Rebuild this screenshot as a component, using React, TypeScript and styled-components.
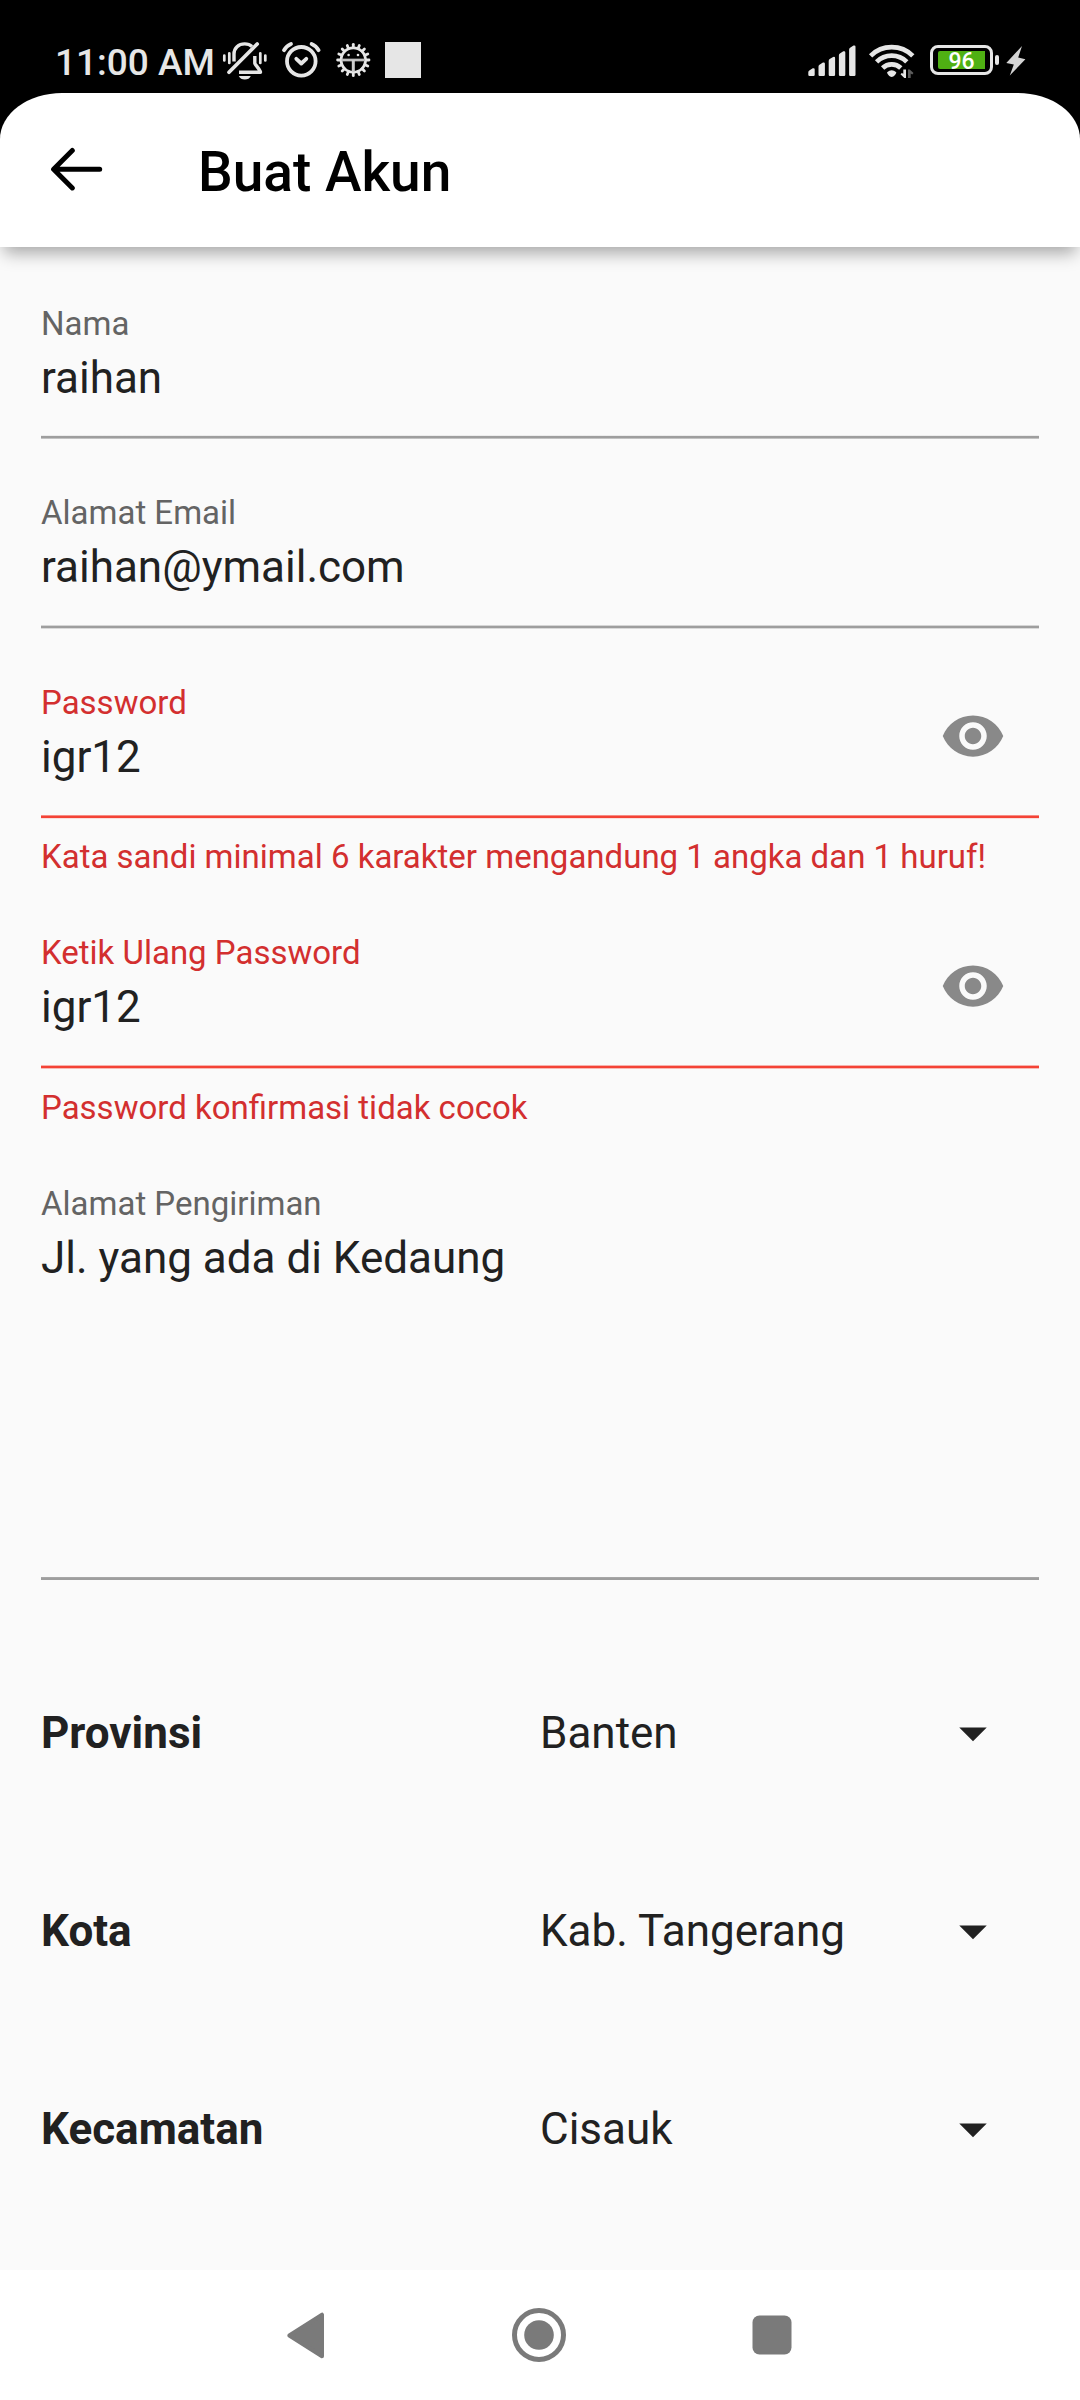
import React from 'react';
import styled, { createGlobalStyle } from 'styled-components';

const GlobalStyle = createGlobalStyle`
  * { box-sizing: border-box; }
  body { margin: 0; background: #fafafa; font-family: Roboto, "Liberation Sans", sans-serif; }
`;

const Screen = styled.div`
  display: flex;
  flex-direction: column;
  width: 1080px;
  height: 2400px;
  overflow: hidden;
  background: #fafafa;
  color: #212121;
`;

const TopArea = styled.div`
  flex: none;
  background: #000;
  box-shadow: 0 10px 16px -4px rgba(0, 0, 0, 0.34);
`;

const StatusBar = styled.div`
  display: flex;
  align-items: flex-start;
  height: 93px;
  padding: 40px 54px 0 55px;
  color: #e6e6e6;
`;

const Clock = styled.span`
  width: 167px;
  font-size: 37px;
  font-weight: 500;
  line-height: 45px;
  white-space: nowrap;
`;

const Glyph = styled.svg<{ $gap?: number }>`
  display: block;
  flex: none;
  margin-left: ${(p) => p.$gap ?? 0}px;
`;

const NoticeSquare = styled.span`
  width: 36px;
  height: 36px;
  margin: 2px auto 0 13px;
  background: #e6e6e6;
`;

const Battery = styled.div`
  display: flex;
  align-items: center;
  gap: 2px;
  height: 30px;
  margin: 5px 0 0 14px;
`;

const BatteryShell = styled.div`
  display: flex;
  align-items: center;
  justify-content: center;
  width: 63px;
  height: 30px;
  border: 3px solid #e6e6e6;
  border-radius: 8px;
`;

const BatteryCharge = styled.span`
  width: 47px;
  height: 18px;
  border-radius: 2px 0 0 2px;
  background: #4fb013;
  color: #fff;
  font-size: 23px;
  font-weight: 500;
  line-height: 22px;
  text-align: center;
`;

const BatteryTip = styled.span`
  width: 4px;
  height: 10px;
  border-radius: 2px;
  background: #e6e6e6;
`;

const AppBar = styled.header`
  display: flex;
  height: 154px;
  padding-left: 50px;
  background: #fff;
  border-radius: 62px 62px 0 0 / 46px 46px 0 0;
`;

const BackButton = styled.button`
  display: flex;
  align-items: flex-start;
  width: 148px;
  padding: 54px 0 0;
  border: 0;
  background: none;
`;

const Title = styled.h1`
  margin: 47px 0 0;
  color: #000;
  font-size: 55px;
  font-weight: 500;
  line-height: 64px;
`;

const Form = styled.main`
  display: flex;
  flex: 1;
  flex-direction: column;
  padding: 57px 41px 0;
`;

const FieldGroup = styled.div<{ $after: number }>`
  display: flex;
  flex-direction: column;
  margin-bottom: ${(p) => p.$after}px;
`;

const FieldBox = styled.div<{ $height: number }>`
  display: flex;
  align-items: flex-start;
  justify-content: space-between;
  height: ${(p) => p.$height}px;
  padding-right: 33.5px;
`;

const FieldText = styled.div`
  display: flex;
  flex-direction: column;
  gap: 9px;
`;

const Label = styled.span<{ $error?: boolean }>`
  color: ${(p) => (p.$error ? '#d32f2f' : '#646464')};
  font-size: 33px;
  line-height: 39px;
`;

const Value = styled.span`
  font-size: 44px;
  line-height: 52px;
`;

const EyeButton = styled.button`
  width: 66px;
  height: 66px;
  margin-top: 20px;
  padding: 0;
  border: 0;
  background: none;
`;

/* A 2.75px rule: two solid rows with a softer row above and below. */
const Underline = styled.div<{ $rgb: string; $lead: number; $trail: number }>`
  height: 4px;
  background: linear-gradient(
    rgba(${(p) => p.$rgb}, ${(p) => p.$lead}) 0 1px,
    rgb(${(p) => p.$rgb}) 1px 2px,
    rgb(${(p) => p.$rgb}) 2px 3px,
    rgba(${(p) => p.$rgb}, ${(p) => p.$trail}) 3px 4px
  );
`;

const ErrorText = styled.span<{ $gap: number }>`
  margin-top: ${(p) => p.$gap}px;
  color: #d32f2f;
  font-size: 33px;
  line-height: 39px;
  white-space: nowrap;
`;

const Regions = styled.section`
  display: grid;
  grid-auto-rows: 198px;
`;

const RegionRow = styled.div`
  display: grid;
  grid-template-columns: 1fr 1fr;
  align-items: center;
`;

const RegionName = styled.span`
  font-size: 44px;
  font-weight: 700;
  line-height: 52px;
`;

const RegionSelect = styled.div`
  display: flex;
  align-items: center;
  justify-content: space-between;
  padding-right: 33.5px;
`;

const NavBar = styled.nav`
  display: flex;
  flex: none;
  align-items: center;
  justify-content: center;
  gap: 178px;
  height: 130px;
  padding-right: 1px;
  background: #fff;
`;

const NavButton = styled.button`
  width: 55px;
  height: 55px;
  padding: 0;
  border: 0;
  background: none;
`;

const GRAY = '158, 158, 158';
const RED = '244, 67, 54';

const fields = [
  { label: 'Nama', value: 'raihan', height: 131, lead: 0.15, trail: 0.6, after: 54 },
  { label: 'Alamat Email', value: 'raihan@ymail.com', height: 132, lead: 0.4, trail: 0.35, after: 54 },
  {
    label: 'Password', value: 'igr12', height: 132, lead: 0.6, trail: 0.15, after: 57,
    error: 'Kata sandi minimal 6 karakter mengandung 1 angka dan 1 huruf!', errorGap: 18,
  },
  {
    label: 'Ketik Ulang Password', value: 'igr12', height: 132, lead: 0.4, trail: 0.35, after: 57,
    error: 'Password konfirmasi tidak cocok', errorGap: 19,
  },
  { label: 'Alamat Pengiriman', value: 'Jl. yang ada di Kedaung', height: 393, lead: 0.9, trail: 0, after: 53 },
];

const regions = [
  ['Provinsi', 'Banten'],
  ['Kota', 'Kab. Tangerang'],
  ['Kecamatan', 'Cisauk'],
];

const MutedBell = () => (
  <Glyph width="46" height="40" fill="none" stroke="#e6e6e6" strokeWidth="3.4" strokeLinecap="round" strokeLinejoin="round">
    <path d="M2.3 15.5v5M7.3 13.3v9.6M38.3 13.3v9.6M43.3 15.5v5" strokeWidth="2.7" />
    <path d="M12 21.5V14C12 8 16.5 3.9 22.7 3.9c3 0 5.600 1 7.300 2.600" strokeLinecap="butt" />
    <path d="M7 32.300 35.200 4" strokeWidth="3.700" />
    <path d="M32.800 16v7.200c0 1.200 5.700 7 5.700 9.100H17" strokeLinecap="butt" />
    <path d="M16.800 36h12c-1 2.300-3.200 3.600-6 3.600s-5-1.300-6-3.600z" fill="#e6e6e6" stroke="none" />
  </Glyph>
);

const AlarmClock = () => (
  <Glyph $gap={12} width="43" height="40" fill="none" stroke="#e6e6e6" strokeWidth="3.8" strokeLinecap="round" strokeLinejoin="round">
    <circle cx="21.3" cy="21.3" r="14.3" />
    <path d="m16.300 18.800 5 4.700 5-4.700" />
    <path d="M4 10.200c1.700-3 4-5.100 7-6.300M38.600 10.200c-1.700-3-4-5.100-7-6.300" />
  </Glyph>
);

const BugGear = () => (
  <Glyph $gap={12} width="37" height="40" fill="none" stroke="#e6e6e6">
    <circle cx="18.3" cy="20" r="12.2" strokeWidth="2.800" />
    {Array.from({ length: 16 }, (_, i) => (
      <path key={i} d="M18.300 7.500V4.300" strokeWidth="2.800" strokeLinecap="round" transform={`rotate(${i * 22.5} 18.3 20)`} />
    ))}
    <path d="M6.500 20h23.600" strokeWidth="2.700" stroke="#bdbdbd" />
    <path d="M18.300 20v12" strokeWidth="3" stroke="#cfcfcf" />
    <circle cx="13.6" cy="15" r="1.3" fill="#e6e6e6" stroke="none" />
    <circle cx="23" cy="15" r="1.3" fill="#e6e6e6" stroke="none" />
  </Glyph>
);

const Signal = () => (
  <Glyph width="48" height="40" fill="#e6e6e6">
    {[28, 22.3, 16.7, 11, 5.3].map((top, i) => {
      const x = 0.3 + i * 10.2;
      return (
        <path key={top} d={`M${x} ${top + 4.2}q0-1.200 1-1.800l3.400-2.100q2-.6 2 1.200V34.800q0 1.200-1.200 1.200H${x + 1.2}q-1.200 0-1.200-1.200z`} />
      );
    })}
  </Glyph>
);

const Wifi = () => (
  <Glyph $gap={12} width="48" height="40" fill="none" stroke="#e6e6e6" strokeWidth="4.700">
    <path d="M2.600 15.800A30 30 0 0 1 44.800 15.800" />
    <path d="M8.600 21.800A21.500 21.500 0 0 1 38.800 21.800" />
    <path d="M14.600 28A13 13 0 0 1 32.800 28" />
    <path d="M19.100 32.300q4.600-4.200 9.200 0c0 2-2.600 4.700-4.600 4.700s-4.600-2.700-4.600-4.700z" fill="#e6e6e6" stroke="none" />
    <path d="M34.800 29.500h2.700V38h-1.700L32 34.300l1.300-1.300 1.500.800z" fill="#e6e6e6" stroke="none" transform="translate(.5 0)" />
    <path d="M40 38v-8.500h1.700l3.800 3.600-1.300 1.300-1.500-.8V38z" fill="#5c5c5c" stroke="none" />
  </Glyph>
);

const Bolt = () => (
  <Glyph $gap={7} width="20" height="40" fill="#d4d4d4">
    <path d="M16 6 .300 23l7.500 1.400L3.800 35.500 19.400 19.300l-7.200-1.700z" />
  </Glyph>
);

const Eye = () => (
  <Glyph width="66" height="66" viewBox="0 0 24 24" fill="#898989">
    <path d="M12 4.500C7 4.500 2.730 7.610 1 12c1.730 4.390 6 7.500 11 7.500s9.270-3.110 11-7.500c-1.730-4.390-6-7.500-11-7.500zM12 17c-2.760 0-5-2.240-5-5s2.240-5 5-5 5 2.240 5 5-2.240 5-5 5zm0-8c-1.660 0-3 1.340-3 3s1.340 3 3 3 3-1.340 3-3-1.340-3-3-3z" />
  </Glyph>
);

const DropArrow = () => (
  <Glyph width="66" height="66" viewBox="0 0 24 24" fill="#212121">
    <path d="m7 10 5 5 5-5z" />
  </Glyph>
);

export default function App() {
  return (
    <>
      <GlobalStyle />
      <Screen>
        <TopArea>
          <StatusBar>
            <Clock>11:00 AM</Clock>
            <MutedBell />
            <AlarmClock />
            <BugGear />
            <NoticeSquare />
            <Signal />
            <Wifi />
            <Battery>
              <BatteryShell>
                <BatteryCharge>96</BatteryCharge>
              </BatteryShell>
              <BatteryTip />
            </Battery>
            <Bolt />
          </StatusBar>
          <AppBar>
            <BackButton aria-label="Kembali">
              <Glyph width="54" height="45" fill="none" stroke="#000" strokeWidth="5" strokeLinecap="round" strokeLinejoin="round">
                <path d="M22.300 3.500 3.600 22.200l18.700 18.700M4.500 22.200h45.200" />
              </Glyph>
            </BackButton>
            <Title>Buat Akun</Title>
          </AppBar>
        </TopArea>
        <Form>
          {fields.map((f) => (
            <FieldGroup key={f.label} $after={f.after}>
              <FieldBox $height={f.height}>
                <FieldText>
                  <Label $error={!!f.error}>{f.label}</Label>
                  <Value>{f.value}</Value>
                </FieldText>
                {f.error && (
                  <EyeButton aria-label={f.label}>
                    <Eye />
                  </EyeButton>
                )}
              </FieldBox>
              <Underline $rgb={f.error ? RED : GRAY} $lead={f.lead} $trail={f.trail} />
              {f.error && <ErrorText $gap={f.errorGap ?? 18}>{f.error}</ErrorText>}
            </FieldGroup>
          ))}
          <Regions>
            {regions.map(([name, value]) => (
              <RegionRow key={name}>
                <RegionName>{name}</RegionName>
                <RegionSelect>
                  <Value>{value}</Value>
                  <DropArrow />
                </RegionSelect>
              </RegionRow>
            ))}
          </Regions>
        </Form>
        <NavBar>
          <NavButton aria-label="Back">
            <Glyph width="55" height="55" fill="#7a7a7a" stroke="#7a7a7a" strokeWidth="4" strokeLinejoin="round">
              <path d="M43 6.700v41.600L10.300 27.500z" />
            </Glyph>
          </NavButton>
          <NavButton aria-label="Home">
            <Glyph width="55" height="55" fill="#7a7a7a">
              <circle cx="27" cy="27" r="24.500" fill="none" stroke="#7a7a7a" strokeWidth="5" />
              <circle cx="27" cy="27" r="14.800" />
            </Glyph>
          </NavButton>
          <NavButton aria-label="Recents">
            <Glyph width="55" height="55" fill="#7a7a7a">
              <rect x="7.500" y="7.500" width="39" height="39" rx="7" />
            </Glyph>
          </NavButton>
        </NavBar>
      </Screen>
    </>
  );
}
